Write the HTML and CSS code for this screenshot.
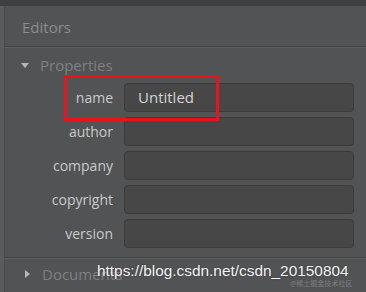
FILE: index.html
```html
<!DOCTYPE html>
<html lang="en">
<head>
<meta charset="UTF-8">
<title>Editors</title>
<link rel="stylesheet" href="styles.css">
</head>
<body>

<div class="topbar"></div>
<div class="main">
  <div class="strip"></div>
  <div class="panel">
    <div class="header">Editors</div>

    <div class="section">
      <span class="tri-down"></span>
      <span class="section-title">Properties</span>
    </div>

    <div class="fields">
      <div class="row">
        <div class="label">name</div>
        <div class="input">Untitled</div>
      </div>
      <div class="row">
        <div class="label">author</div>
        <div class="input"></div>
      </div>
      <div class="row">
        <div class="label">company</div>
        <div class="input"></div>
      </div>
      <div class="row">
        <div class="label">copyright</div>
        <div class="input"></div>
      </div>
      <div class="row">
        <div class="label">version</div>
        <div class="input"></div>
      </div>
    </div>

    <div class="section docs">
      <span class="tri-right"></span>
      <span class="section-title">Documents</span>
    </div>
  </div>
</div>

<!-- annotation overlays -->
<div class="highlight"></div>
<div class="watermark">https://blog.csdn.net/csdn_20150804</div>
<div class="wm-small">@稀土掘金技术社区</div>

</body>
</html>
```

FILE: styles.css
```css
body { margin: 0; width: 366px; height: 292px; overflow: hidden; background: #525354; font-family: "Open Sans", "Noto Sans CJK SC", sans-serif; position: relative; }
.topbar { height: 6px; background: #3d3f41; }
.main { display: flex; height: 286px; }
.strip { width: 5px; background: #5a5b5c; box-shadow: inset -1px 0 0 #48494a; }
.panel { flex: 1; display: flex; flex-direction: column; }
.header { height: 41px; box-sizing: border-box; padding: 11px 0 0 17px; font-size: 15px; color: #8c8d8e; border-bottom: 1px solid #434445; box-shadow: 0 1px 0 #5d5e5f; }
.section { display: flex; align-items: center; height: 20px; margin-top: 8px; padding-left: 16px; }
.section-title { font-size: 15px; color: #7f8081; margin-left: 11px; }
.tri-down { width: 0; height: 0; border-left: 4px solid transparent; border-right: 4px solid transparent; border-top: 5px solid #b5b6b7; }
.tri-right { width: 0; height: 0; border-top: 4px solid transparent; border-bottom: 4px solid transparent; border-left: 5px solid #b5b6b7; margin-left: 4px; }
.docs { margin-top: 0; height: 29px; padding-top: 1px; border-top: 1px solid #444546; box-shadow: inset 0 1px 0 #5d5e5f; }
.docs .section-title { margin-left: 12px; }
.fields { display: flex; flex-direction: column; gap: 5px; padding: 8px 12px 9px 0; }
.row { display: flex; align-items: center; }
.label { width: 108px; text-align: right; font-size: 14px; color: #c9cacb; }
.input { flex: 1; height: 29px; margin-left: 11px; box-sizing: border-box; background: #474747; border: 1px solid #3b3b3b; border-radius: 4px; padding: 3px 0 0 13px; font-size: 15px; color: #d4d4d4; }
.highlight { position: absolute; left: 64px; top: 75px; width: 149px; height: 40px; border: 3px solid #e8131b; }
.watermark { position: absolute; left: 97px; top: 262px; font-family: "Liberation Sans", Arial, sans-serif; font-size: 15.4px; color: #f4f4f4; text-shadow: 0 0 2px rgba(0,0,0,0.35); white-space: nowrap; }
.wm-small { position: absolute; left: 290px; top: 278px; font-size: 7px; color: #7d7e7f; white-space: nowrap; }
```
